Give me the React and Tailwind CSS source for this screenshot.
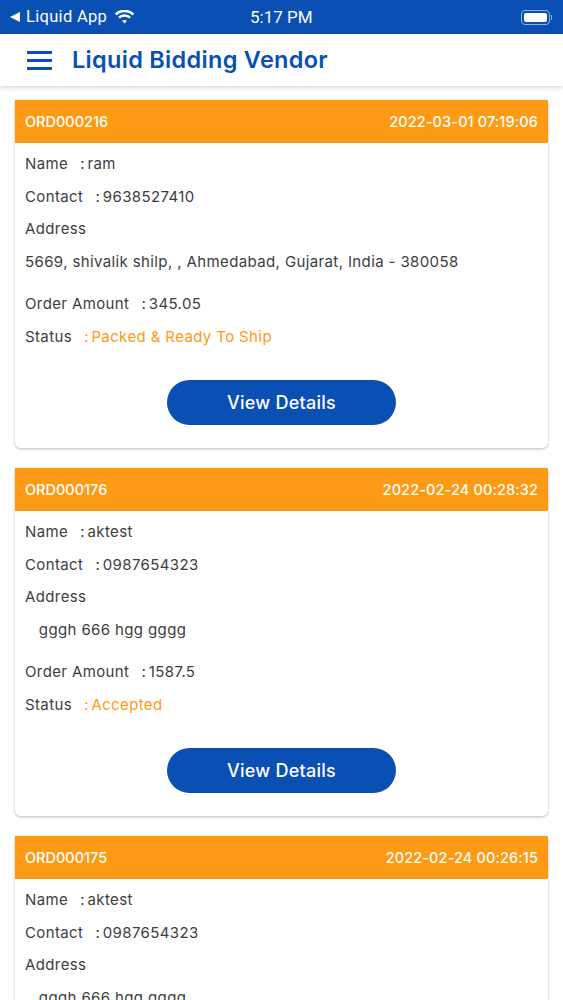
const ordenes = [
  { id: 'ORD000216', fecha: '2022-03-01 07:19:06', nombre: 'ram', contacto: '9638527410', direccion: '5669, shivalik shilp, , Ahmedabad, Gujarat, India - 380058', monto: '345.05', estado: 'Packed & Ready To Ship' },
  { id: 'ORD000176', fecha: '2022-02-24 00:28:32', nombre: 'aktest', contacto: '0987654323', direccion: '\u00a0\u00a0\u00a0gggh 666 hgg gggg', monto: '1587.5', estado: 'Accepted' },
  { id: 'ORD000175', fecha: '2022-02-24 00:26:15', nombre: 'aktest', contacto: '0987654323', direccion: '\u00a0\u00a0\u00a0gggh 666 hgg gggg', monto: '1587.5', estado: 'Accepted' },
];

function Fila({ children, className = '' }) {
  return <div className={`h-[32.5px] flex items-center whitespace-pre ${className}`}>{children}</div>;
}

function Valor({ children }) {
  return (
    <>
      <span className="ml-[3px]">:</span>
      <span className="ml-[2.5px]">{children}</span>
    </>
  );
}

function Pedido({ o }) {
  return (
    <div className="bg-white rounded-b-md shadow-[0_1px_3px_rgba(0,0,0,0.28)] shrink-0">
      <div className="h-[43px] bg-[#fe9a15] flex items-center justify-between px-2.5 text-white text-[14.5px] font-medium">
        <span>{o.id}</span>
        <span className="tracking-[0.12px]">{o.fecha}</span>
      </div>
      <div className="px-2.5 pt-[5px] text-[15px] tracking-[0.38px] text-[#3d3d3d]">
        <Fila>Name  <Valor>{o.nombre}</Valor></Fila>
        <Fila>Contact  <Valor>{o.contacto}</Valor></Fila>
        <Fila>Address</Fila>
        <Fila>{o.direccion}</Fila>
        <Fila className="mt-[10px]">Order Amount  <Valor>{o.monto}</Valor></Fila>
        <Fila>Status  <span className="ml-[3px] text-[#fe9a15]">:</span><span className="ml-[2.5px] text-[#fe9a15]">{o.estado}</span></Fila>
      </div>
      <div className="flex justify-center pt-[27px] pb-[23px]">
        <button className="w-[229px] h-[45px] rounded-full bg-[#0a4fb3] text-white text-[18px] tracking-[0.25px] font-medium">View Details</button>
      </div>
    </div>
  );
}

export default function App() {
  return (
    <div className="h-[1000px] overflow-hidden bg-white flex flex-col font-['Inter',sans-serif]">
      {/* barra de estado */}
      <div className="h-[34px] bg-[#0a4fb3] flex items-center justify-between pl-2.5 pr-[11px] text-white relative shrink-0">
        <div className="flex items-center gap-[6px] text-[16.5px] tracking-[0.3px] font-['Roboto',sans-serif]">
          <span className="w-0 h-0 border-y-[5px] border-y-transparent border-r-[10px] border-r-white"></span>
          <span>Liquid App</span>
          <svg width="21" height="15" viewBox="0 0 21 15" fill="white" className="ml-[1px]">
            <path d="M10.5 2.2c3 0 5.8 1.2 7.9 3.2l1.7-1.8C17.5 1.1 14.1-.3 10.5-.3S3.5 1.1.9 3.6l1.7 1.8c2.1-2 4.9-3.2 7.9-3.2z" />
            <path d="M10.5 6.8c1.8 0 3.4.7 4.7 1.8l1.7-1.8c-1.7-1.6-4-2.5-6.4-2.5S5.8 5.2 4.1 6.8l1.7 1.8c1.3-1.1 2.9-1.8 4.7-1.8z" />
            <path d="M10.5 11c-.9 0-1.7.3-2.3.9l2.3 2.6 2.3-2.6c-.6-.6-1.4-.9-2.3-.9z" transform="translate(0 -1)" />
          </svg>
        </div>
        <span className="absolute left-[250px] top-[5px] text-[17px] font-['Roboto',sans-serif]">5:17 PM</span>
        <div className="flex items-center gap-[1px]">
          <div className="w-[29px] h-[15px] rounded-[4px] border border-[#8fb0e0] p-[2px]">
            <div className="w-full h-full bg-white rounded-[2px]"></div>
          </div>
          <div className="w-[1px] h-[5px] bg-[#8fb0e0]"></div>
        </div>
      </div>

      {/* cabecera */}
      <div className="h-[52px] bg-white flex items-center shadow-[0_1px_5px_rgba(0,0,0,0.2)] relative z-10 shrink-0">
        <svg width="25" height="19" viewBox="0 0 25 19" fill="#0a4fb3" className="ml-[27px]">
          <rect x="0" y="0" width="25" height="3" rx="0.5" />
          <rect x="0" y="8" width="25" height="3" rx="0.5" />
          <rect x="0" y="16" width="25" height="3" rx="0.5" />
        </svg>
        <h1 className="ml-[20px] text-[23.5px] tracking-[0.3px] font-semibold text-[#0a4fb3]">Liquid Bidding Vendor</h1>
      </div>

      <div className="flex flex-col gap-5 px-[15px] pt-[14px]">
        {ordenes.map((o) => <Pedido key={o.id} o={o} />)}
      </div>
    </div>
  );
}
